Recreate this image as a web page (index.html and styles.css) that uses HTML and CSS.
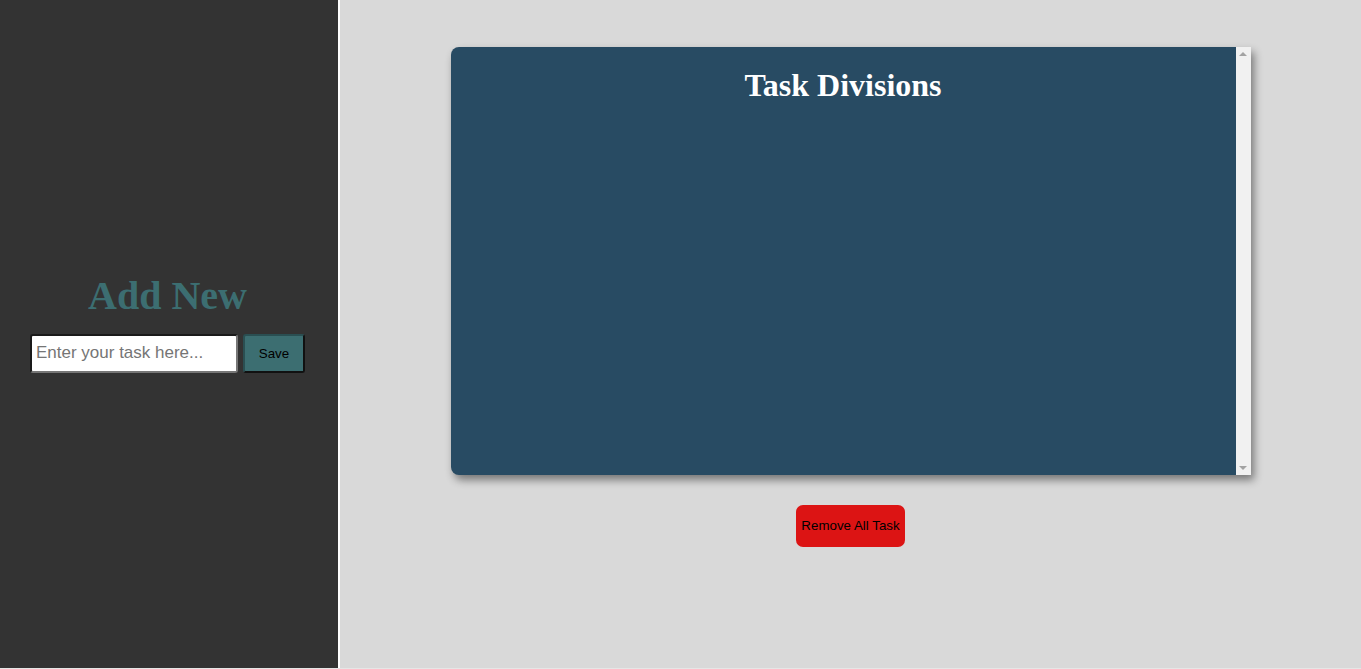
FILE: index.html
```html
<!DOCTYPE html>
<html>
<head>
<meta charset="utf-8">
<link rel="stylesheet" href="styles.css">
</head>
<body>
<div class="app">
  <aside class="sidebar">
    <h1 class="add-title">Add New</h1>
    <div class="add-form">
      <input class="task-input" type="text" placeholder="Enter your task here...">
      <button class="save-btn">Save</button>
    </div>
  </aside>
  <main class="main">
    <section class="board">
      <div class="board-content">
        <h1 class="board-title">Task Divisions</h1>
      </div>
      <div class="scrollbar">
        <span class="arrow arrow-up"></span>
        <span class="arrow arrow-down"></span>
      </div>
    </section>
    <button class="remove-btn">Remove All Task</button>
  </main>
</div>
</body>
</html>
```
FILE: styles.css
```css
html, body {
  margin: 0;
  padding: 0;
  background: #d9d9d9;
}
.app {
  display: flex;
  height: 668px;
  border-bottom: 1px solid #e6e6e6;
}
.sidebar {
  width: 340px;
  background: #333333;
  border-right: 2px solid #ffffff;
  display: flex;
  flex-direction: column;
  align-items: center;
  justify-content: center;
  padding-bottom: 24px;
  padding-right: 3px;
  box-sizing: border-box;
}
.add-title {
  font-family: "Liberation Serif", serif;
  font-weight: bold;
  font-size: 40px;
  color: #3c6e71;
  margin: 1px 0 15px 0;
  line-height: 46px;
}
.add-form {
  display: flex;
  gap: 5px;
}
.task-input {
  width: 208px;
  height: 39px;
  box-sizing: border-box;
  font-family: "Liberation Sans", sans-serif;
  font-size: 17px;
  padding: 0 4px;
  border: 2px solid #767676;
  border-color: #1a1a1a #777 #777 #1a1a1a;
  border-radius: 3px;
  background: #fff;
}
.task-input::placeholder {
  color: #757575;
}
.save-btn {
  width: 62px;
  height: 39px;
  box-sizing: border-box;
  background: #3c6e71;
  border: 2px solid #1c1c1c;
  border-color: #2a4f52 #111 #111 #2a4f52;
  border-radius: 3px;
  font-family: "Liberation Sans", sans-serif;
  font-size: 13.33px;
  color: #000;
}
.main {
  flex: 1;
  display: flex;
  flex-direction: column;
  align-items: center;
  padding-top: 47px;
}
.board {
  width: 800px;
  height: 428px;
  display: flex;
  background: #284b63;
  border-radius: 8px 0 0 8px;
  box-shadow: 3px 5px 9px rgba(0, 0, 0, 0.45);
}
.board-content {
  flex: 1;
}
.board-title {
  font-family: "Liberation Serif", serif;
  font-weight: bold;
  font-size: 32px;
  color: #ffffff;
  text-align: center;
  margin: 20px 0 0 0;
}
.scrollbar {
  width: 15px;
  background: #f1f1f1;
  display: flex;
  flex-direction: column;
  justify-content: space-between;
  align-items: center;
  padding: 5px 0;
  box-sizing: border-box;
}
.arrow {
  width: 0;
  height: 0;
  border-left: 4px solid transparent;
  border-right: 4px solid transparent;
}
.arrow-up {
  border-bottom: 4px solid #a3a3a3;
}
.arrow-down {
  border-top: 4px solid #a3a3a3;
}
.remove-btn {
  margin-top: 30px;
  width: 109px;
  height: 42px;
  background: #dc1414;
  border: none;
  border-radius: 7px;
  font-family: "Liberation Sans", sans-serif;
  font-size: 13.33px;
  color: #000;
  padding: 0 0 2px 0;
}
```
